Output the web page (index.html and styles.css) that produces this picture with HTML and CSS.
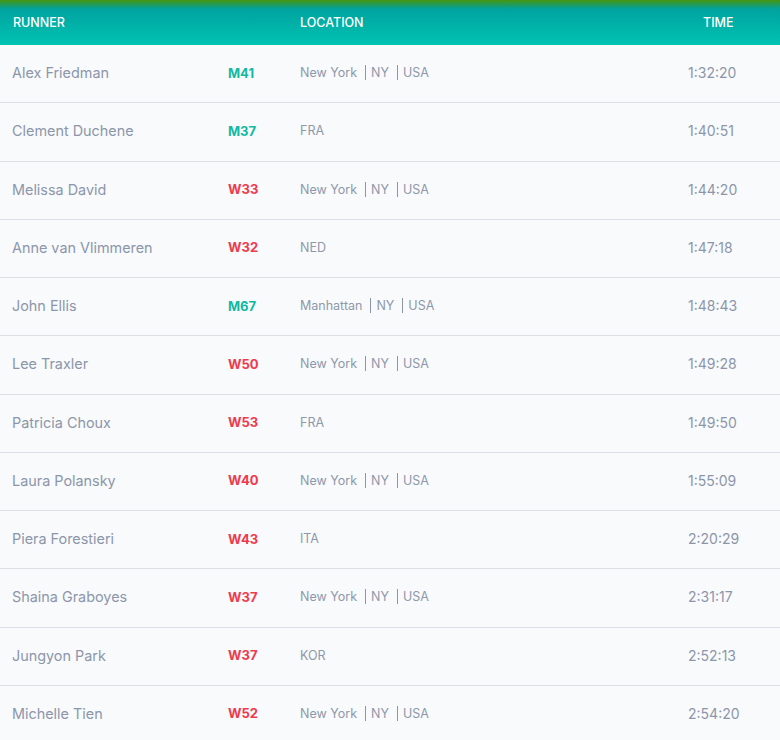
FILE: index.html
```html
<!DOCTYPE html>
<html>
<head>
<meta charset="utf-8">
<link rel="stylesheet" href="styles.css">
</head>
<body>
<div class="table">
  <div class="head">
    <div class="h-name">RUNNER</div>
    <div></div>
    <div class="h-loc">LOCATION</div>
    <div class="h-time">TIME</div>
  </div>
  <div class="row"><div class="c-name">Alex Friedman</div><div class="c-cat m">M41</div><div class="c-loc"><span>New York</span><span class="sep">NY</span><span class="sep">USA</span></div><div class="c-time">1:32:20</div></div>
  <div class="row"><div class="c-name">Clement Duchene</div><div class="c-cat m">M37</div><div class="c-loc"><span>FRA</span></div><div class="c-time">1:40:51</div></div>
  <div class="row"><div class="c-name">Melissa David</div><div class="c-cat w">W33</div><div class="c-loc"><span>New York</span><span class="sep">NY</span><span class="sep">USA</span></div><div class="c-time">1:44:20</div></div>
  <div class="row"><div class="c-name">Anne van Vlimmeren</div><div class="c-cat w">W32</div><div class="c-loc"><span>NED</span></div><div class="c-time">1:47:18</div></div>
  <div class="row"><div class="c-name">John Ellis</div><div class="c-cat m">M67</div><div class="c-loc"><span>Manhattan</span><span class="sep">NY</span><span class="sep">USA</span></div><div class="c-time">1:48:43</div></div>
  <div class="row"><div class="c-name">Lee Traxler</div><div class="c-cat w">W50</div><div class="c-loc"><span>New York</span><span class="sep">NY</span><span class="sep">USA</span></div><div class="c-time">1:49:28</div></div>
  <div class="row"><div class="c-name">Patricia Choux</div><div class="c-cat w">W53</div><div class="c-loc"><span>FRA</span></div><div class="c-time">1:49:50</div></div>
  <div class="row"><div class="c-name">Laura Polansky</div><div class="c-cat w">W40</div><div class="c-loc"><span>New York</span><span class="sep">NY</span><span class="sep">USA</span></div><div class="c-time">1:55:09</div></div>
  <div class="row"><div class="c-name">Piera Forestieri</div><div class="c-cat w">W43</div><div class="c-loc"><span>ITA</span></div><div class="c-time">2:20:29</div></div>
  <div class="row"><div class="c-name">Shaina Graboyes</div><div class="c-cat w">W37</div><div class="c-loc"><span>New York</span><span class="sep">NY</span><span class="sep">USA</span></div><div class="c-time">2:31:17</div></div>
  <div class="row"><div class="c-name">Jungyon Park</div><div class="c-cat w">W37</div><div class="c-loc"><span>KOR</span></div><div class="c-time">2:52:13</div></div>
  <div class="row"><div class="c-name">Michelle Tien</div><div class="c-cat w">W52</div><div class="c-loc"><span>New York</span><span class="sep">NY</span><span class="sep">USA</span></div><div class="c-time">2:54:20</div></div>
</div>
</body>
</html>
```

FILE: styles.css
```css
html, body {
  margin: 0;
  padding: 0;
  background: #f9fafc;
}
body {
  font-family: Inter, "Noto Sans", sans-serif;
  width: 780px;
  height: 740px;
  overflow: hidden;
}
.table {
  display: flex;
  flex-direction: column;
}
.head, .row {
  display: grid;
  grid-template-columns: 228px 72px 388px 92px;
  align-items: center;
  box-sizing: border-box;
}
.head {
  height: 45px;
  background: linear-gradient(to bottom, #47940f 0px, #00a39f 9px, #00c3b3 100%);
  color: #ffffff;
  font-size: 12.5px;
  font-weight: 500;
}
.h-name { padding-left: 13px; }
.h-time { padding-left: 15px; }
.row {
  height: 58.25px;
  border-bottom: 1px solid #dcdfe3;
  color: #8c96aa;
  font-size: 14.4px;
}
.c-name {
  padding-left: 12px;
}
.c-cat {
  font-size: 13px;
  font-weight: 700;
}
.c-cat.m { color: #11b9a2; }
.c-cat.w { color: #f0394b; }
.c-loc {
  display: flex;
  align-items: center;
  font-size: 12.5px;
  color: #8e98ab;
}
.sep {
  border-left: 1px solid #8996ab;
  margin-left: 8px;
  padding-left: 5px;
  line-height: 15px;
}
.c-time {
  font-size: 14px;
}
.c-name, .c-cat, .c-loc, .c-time {
  position: relative;
  top: -1px;
}
```
